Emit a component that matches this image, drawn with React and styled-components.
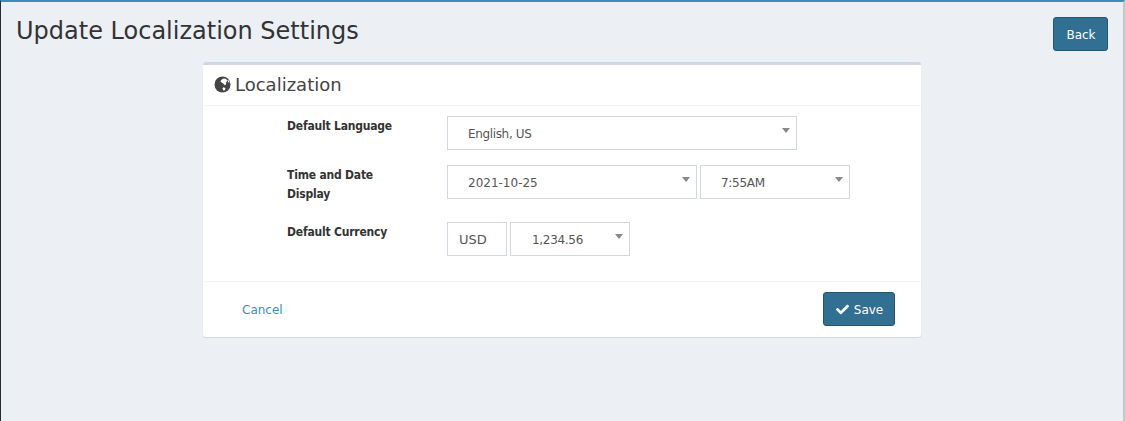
import React from "react";
import styled, { createGlobalStyle } from "styled-components";
import { FaCheck } from "react-icons/fa";

const GlobalStyle = createGlobalStyle`
  html, body {
    margin: 0;
    padding: 0;
    height: 100%;
    overflow: hidden;
    background: #ecf0f5;
    font-family: "DejaVu Sans", sans-serif;
  }
`;

const Page = styled.div`
  box-sizing: border-box;
  width: 1125px;
  height: 421px;
  background: #ecf0f5;
  border-top: 2px solid #3c8dbc;
  border-left: 1px solid #222d32;
  border-right: 2px solid #c4c8cc;
`;

const PageHeader = styled.header`
  display: flex;
  justify-content: space-between;
  align-items: flex-start;
  padding: 15px 15px 0 15px;
  height: 60px;
  box-sizing: border-box;
`;

const Title = styled.h1`
  margin: 0;
  font-size: 24px;
  font-weight: 400;
  line-height: 28px;
  color: #333;
`;

const Button = styled.button`
  display: inline-flex;
  align-items: center;
  justify-content: center;
  gap: 5px;
  box-sizing: border-box;
  width: ${(p) => p.$width}px;
  height: 34px;
  padding: 1px 0 0 1px;
  border: 1px solid #23566f;
  border-radius: 3px;
  background: #316f93;
  color: #fff;
  font-family: inherit;
  font-size: 12px;
`;

const Card = styled.section`
  width: 718px;
  margin-left: 202px;
  background: #fff;
  border-top: 3px solid #d2d6de;
  border-radius: 3px;
  box-shadow: 0 1px 1px rgba(0, 0, 0, 0.1);
`;

const CardHeader = styled.div`
  display: flex;
  align-items: center;
  gap: 4px;
  box-sizing: border-box;
  height: 41px;
  padding: 0 0 2px 11px;
  border-bottom: 1px solid #f4f4f4;
  color: #444;
  font-size: 18px;
`;

const FormBody = styled.div`
  display: flex;
  flex-direction: column;
  padding: 10px 0 25px 84px;
`;

const Row = styled.div`
  display: grid;
  grid-template-columns: 160px 1fr;
  margin-bottom: ${(p) => p.$gap}px;
`;

const Label = styled.label`
  font-stretch: condensed;
  font-size: 12px;
  font-weight: 700;
  line-height: 19px;
  padding-top: 1px;
  letter-spacing: -0.2px;
  color: #333;
  max-width: 110px;
`;

const Fields = styled.div`
  display: flex;
  gap: 3px;
`;

const Select = styled.div`
  position: relative;
  box-sizing: border-box;
  width: ${(p) => p.$width}px;
  height: 34px;
  padding-left: ${(p) => p.$pad}px;
  border: 1px solid #d2d6de;
  color: #555;
  font-size: 12px;
  line-height: 34px;
  letter-spacing: ${(p) => p.$track || 0}px;

  &::after {
    content: "";
    position: absolute;
    top: 11px;
    right: 6px;
    border-top: 5px solid #888;
    border-left: 4px solid transparent;
    border-right: 4px solid transparent;
  }
`;

const Addon = styled.div`
  box-sizing: border-box;
  width: 60px;
  height: 34px;
  padding-left: 11px;
  border: 1px solid #d2d6de;
  color: #555;
  font-size: 13px;
  line-height: 33px;
`;

const CardFooter = styled.div`
  display: flex;
  justify-content: space-between;
  align-items: flex-start;
  height: 56px;
  padding: 10px 26px 0 39px;
  box-sizing: border-box;
  border-top: 1px solid #f4f4f4;
`;

const CancelLink = styled.a`
  color: #3c8dbc;
  font-size: 12px;
  line-height: 36px;
  text-decoration: none;
`;

// fa-globe from the reference: dark disc with two pale land patches
const GlobeIcon = () => (
  <svg width="17" height="17" viewBox="0 0 17 17">
    <circle cx="8.5" cy="8.5" r="8" fill="#444" />
    <path
      d="M8 3.2c1.6-.9 3.4-.8 4.6.2l.6 1.5-1 1.2-.2 2.3-1.2.8-1.6-1.7L7.6 6.6 6.4 5.2z"
      fill="#fff"
    />
    <path d="M9.2 11.2l2.3.7-.6 2.4-1.5.3-.9-1.8z" fill="#fff" />
    <path d="M14 3.6l1.6 2.6-1 .5-1.2-2.2z" fill="#fff" />
  </svg>
);

export default function App() {
  return (
    <>
      <GlobalStyle />
      <Page>
        <PageHeader>
          <Title>Update Localization Settings</Title>
          <Button $width={55}>Back</Button>
        </PageHeader>
        <Card>
          <CardHeader>
            <GlobeIcon />
            Localization
          </CardHeader>
          <FormBody>
            <Row $gap={15}>
              <Label>Default Language</Label>
              <Fields>
                <Select $width={350} $pad={20} $track={-0.35}>English, US</Select>
              </Fields>
            </Row>
            <Row $gap={18}>
              <Label>Time and Date Display</Label>
              <Fields>
                <Select $width={250} $pad={20}>2021-10-25</Select>
                <Select $width={150} $pad={20} $track={-0.3}>7:55AM</Select>
              </Fields>
            </Row>
            <Row $gap={0}>
              <Label>Default Currency</Label>
              <Fields>
                <Addon>USD</Addon>
                <Select $width={120} $pad={21} $track={-0.3}>1,234.56</Select>
              </Fields>
            </Row>
          </FormBody>
          <CardFooter>
            <CancelLink href="#">Cancel</CancelLink>
            <Button $width={72}>
              <FaCheck size={13} />
              Save
            </Button>
          </CardFooter>
        </Card>
      </Page>
    </>
  );
}
